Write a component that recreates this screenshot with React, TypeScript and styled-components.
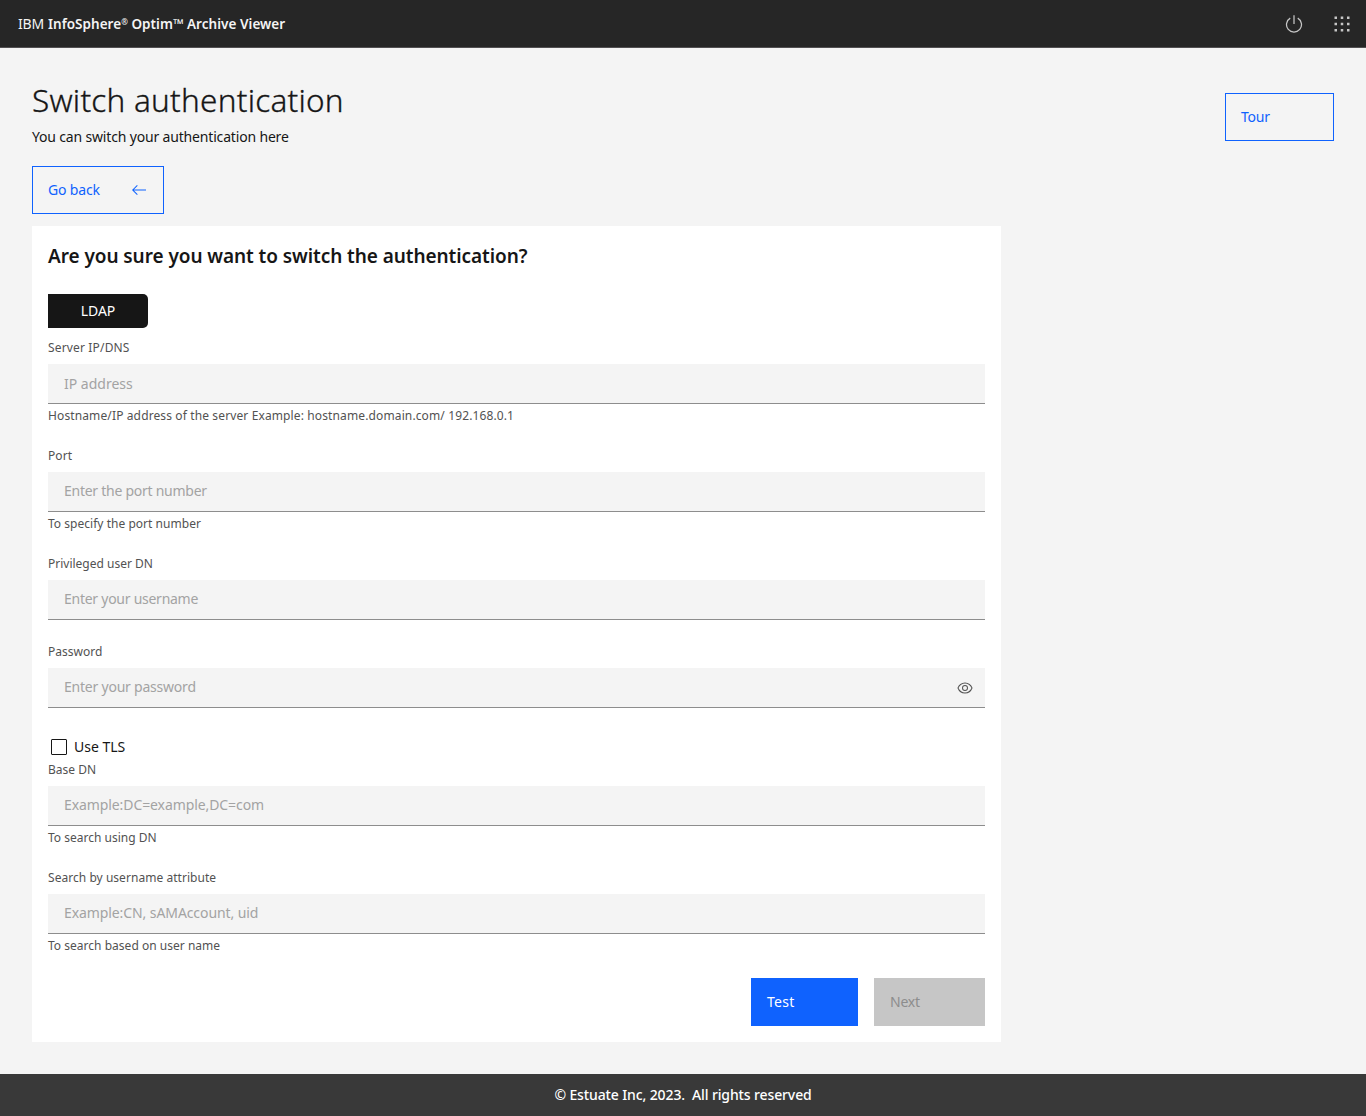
import React, { useState } from "react";
import styled, { createGlobalStyle } from "styled-components";

const GlobalStyle = createGlobalStyle`
  *, *::before, *::after { box-sizing: border-box; }
  body {
    margin: 0;
    background: #f4f4f4;
    color: #161616;
    font-family: "Noto Sans", "Open Sans", sans-serif;
    font-size: 14px;
    line-height: 18px;
  }
  button, input { font: inherit; border-radius: 0; }
`;

const Page = styled.div`
  display: flex;
  flex-direction: column;
  min-height: 1116px;
`;

const Header = styled.header`
  display: flex;
  align-items: center;
  justify-content: space-between;
  height: 48px;
  padding-left: 18px;
  background: #262626;
  border-bottom: 1px solid #525052;
  color: #f4f4f4;
`;

const Brand = styled.div`
  display: flex;
  gap: 4px;
  padding-top: 1px;
  letter-spacing: -0.2px;
`;

const Product = styled.strong`
  font-size: 13.5px;
  font-weight: 600;
  letter-spacing: 0.04px;
  white-space: nowrap;
`;

const Mark = styled.span`
  font-size: 8px;
  line-height: 1;
  vertical-align: 4px;
`;

const HeaderActions = styled.nav`
  display: flex;
`;

const HeaderButton = styled.button`
  display: grid;
  place-items: center;
  width: 48px;
  height: 48px;
  padding: 0;
  border: 0;
  background: transparent;
  color: #c6c6c6;
`;

const Main = styled.main`
  flex: 1;
  padding: 32px;
`;

const TitleBar = styled.div`
  display: flex;
  justify-content: space-between;
  align-items: flex-start;
`;

const Title = styled.h1`
  margin: 0;
  font-size: 31.5px;
  font-weight: 300;
  line-height: 40px;
  letter-spacing: 0.23px;
  -webkit-text-stroke: 0.3px #161616;
`;

const Subtitle = styled.p`
  margin: 8px 0 20px;
  letter-spacing: -0.17px;
`;

const ActionButton = styled.button<{ $kind: "outline" | "primary" | "disabled"; $width: number; $spacing?: number }>`
  display: flex;
  align-items: center;
  justify-content: space-between;
  width: ${(p) => p.$width}px;
  height: 48px;
  padding: 0 16px 0 15px;
  letter-spacing: ${(p) => p.$spacing ?? 0}px;
  border: 1px solid ${(p) => (p.$kind === "disabled" ? "#c6c6c6" : "#0f62fe")};
  background: ${(p) => ({ outline: "transparent", primary: "#0f62fe", disabled: "#c6c6c6" })[p.$kind]};
  color: ${(p) => ({ outline: "#0f62fe", primary: "#ffffff", disabled: "#8d8d8d" })[p.$kind]};
`;

const TourSlot = styled.div`
  padding-top: 13px;
`;

const Card = styled.section`
  width: 969px;
  margin-top: 12px;
  padding: 16px;
  background: #ffffff;
`;

const Question = styled.h2`
  margin: 0 0 24px;
  font-size: 19px;
  font-weight: 600;
  line-height: 28px;
  letter-spacing: -0.07px;
`;

const Segment = styled.button`
  display: block;
  width: 100px;
  height: 34px;
  margin-bottom: 12px;
  padding: 0;
  border: 0;
  && { border-radius: 0 5px 5px 0; }
  background: #161616;
  color: #ffffff;
  text-align: center;
`;

const FieldBlock = styled.div<{ $gap: number }>`
  display: flex;
  flex-direction: column;
  margin-bottom: ${(p) => p.$gap}px;
`;

const Label = styled.label<{ $spacing: number }>`
  margin-bottom: 8px;
  color: #525252;
  font-size: 12px;
  line-height: 16px;
  letter-spacing: ${(p) => p.$spacing}px;
`;

const InputRow = styled.div`
  display: flex;
  align-items: center;
  height: 40px;
  padding: 0 12px 0 16px;
  background: #f4f4f4;
  border-bottom: 1px solid #8d8d8d;
`;

const Input = styled.input<{ $spacing: number; $raised: boolean }>`
  flex: 1;
  min-width: 0;
  height: 39px;
  padding: 0 0 ${(p) => (p.$raised ? 2 : 0)}px;
  border: 0;
  outline: 0;
  background: transparent;
  color: #161616;
  letter-spacing: ${(p) => p.$spacing}px;
  &::placeholder { color: #a3a3a3; opacity: 1; }
`;

const RevealButton = styled.button`
  display: flex;
  padding: 0;
  border: 0;
  background: transparent;
  color: #525252;
`;

const Helper = styled.div<{ $spacing: number }>`
  margin-top: 4px;
  color: #525252;
  font-size: 12px;
  line-height: 16px;
  letter-spacing: ${(p) => p.$spacing}px;
`;

const CheckRow = styled.label`
  display: flex;
  align-items: center;
  gap: 7px;
  height: 24px;
  margin-bottom: 3px;
  padding-left: 3px;
`;

const CheckBox = styled.input`
  appearance: none;
  width: 16px;
  height: 16px;
  margin: 0;
  border: 1px solid #161616;
  && { border-radius: 1px; }
  &:checked { background: #161616; }
`;

const Actions = styled.div`
  display: flex;
  justify-content: flex-end;
  gap: 16px;
`;

const Footer = styled.footer`
  display: flex;
  align-items: center;
  justify-content: center;
  height: 42px;
  background: #393939;
  color: #ffffff;
  font-weight: 500;
  letter-spacing: -0.12px;
  white-space: pre;
`;

const PowerIcon = () => (
  <svg width="20" height="20" viewBox="0 0 32 32" fill="currentColor">
    <path d="M22.5 5.74l-1 1.73a11 11 0 1 1-11 0l-1-1.73a13 13 0 1 0 13 0z" />
    <path d="M15 2h2v14h-2z" />
  </svg>
);

const SwitcherIcon = () => (
  <svg width="20" height="20" viewBox="0 0 32 32" fill="currentColor">
    {[4, 14, 24].map((y) => [4, 14, 24].map((x) => <rect key={`${x}-${y}`} x={x} y={y} width="4" height="4" />))}
  </svg>
);

const ArrowLeftIcon = () => (
  <svg width="16" height="16" viewBox="0 0 16 16" fill="currentColor">
    <path d="M6 13l.7-.7-3.8-3.8H15v-1H2.9l3.8-3.8L6 3 1 8z" />
  </svg>
);

const ViewIcon = () => (
  <svg width="16" height="16" viewBox="0 0 32 32" fill="currentColor">
    <path d="M30.94 15.66A16.69 16.69 0 0 0 16 5 16.69 16.69 0 0 0 1.06 15.66a1 1 0 0 0 0 .68A16.69 16.69 0 0 0 16 27a16.69 16.69 0 0 0 14.94-10.66 1 1 0 0 0 0-.68zM16 25c-5.3 0-10.9-3.93-12.93-9C5.1 10.93 10.7 7 16 7s10.9 3.93 12.93 9C26.9 21.07 21.3 25 16 25z" />
    <path d="M16 10a6 6 0 1 0 6 6 6 6 0 0 0-6-6zm0 10a4 4 0 1 1 4-4 4 4 0 0 1-4 4z" />
  </svg>
);

type FieldProps = {
  id: string;
  label: string;
  labelSpacing?: number;
  placeholder: string;
  spacing?: number;
  raised?: boolean;
  helper?: string;
  helperSpacing?: number;
  gap?: number;
  secret?: boolean;
};

function Field({ id, label, labelSpacing = 0, placeholder, spacing = 0, raised = true, helper, helperSpacing = 0, gap = 24, secret }: FieldProps) {
  const [shown, setShown] = useState(false);
  return (
    <FieldBlock $gap={gap}>
      <Label htmlFor={id} $spacing={labelSpacing}>{label}</Label>
      <InputRow>
        <Input id={id} type={secret && !shown ? "password" : "text"} placeholder={placeholder} $spacing={spacing} $raised={raised} />
        {secret && (
          <RevealButton type="button" aria-label="Show password" onClick={() => setShown(!shown)}>
            <ViewIcon />
          </RevealButton>
        )}
      </InputRow>
      {helper && <Helper $spacing={helperSpacing}>{helper}</Helper>}
    </FieldBlock>
  );
}

export default function App() {
  return (
    <Page>
      <GlobalStyle />
      <Header>
        <Brand>
          <span>IBM</span>
          <Product>InfoSphere<Mark>®</Mark> Optim™ Archive Viewer</Product>
        </Brand>
        <HeaderActions>
          <HeaderButton aria-label="Log out"><PowerIcon /></HeaderButton>
          <HeaderButton aria-label="App switcher"><SwitcherIcon /></HeaderButton>
        </HeaderActions>
      </Header>
      <Main>
        <TitleBar>
          <div>
            <Title>Switch authentication</Title>
            <Subtitle>You can switch your authentication here</Subtitle>
            <ActionButton $kind="outline" $width={132} $spacing={-0.15}>Go back<ArrowLeftIcon /></ActionButton>
          </div>
          <TourSlot>
            <ActionButton $kind="outline" $width={109} $spacing={-0.2}>Tour</ActionButton>
          </TourSlot>
        </TitleBar>
        <Card>
          <Question>Are you sure you want to switch the authentication?</Question>
          <Segment>LDAP</Segment>
          <Field id="server" label="Server IP/DNS" labelSpacing={0.16} placeholder="IP address" raised={false}
            helper="Hostname/IP address of the server Example: hostname.domain.com/ 192.168.0.1" helperSpacing={0.124} />
          <Field id="port" label="Port" labelSpacing={0.06} placeholder="Enter the port number" spacing={-0.26}
            helper="To specify the port number" helperSpacing={0.03} />
          <Field id="user" label="Privileged user DN" placeholder="Enter your username" spacing={-0.26} />
          <Field id="password" label="Password" placeholder="Enter your password" spacing={-0.22} gap={27} secret />
          <CheckRow><CheckBox type="checkbox" />Use TLS</CheckRow>
          <Field id="base" label="Base DN" placeholder="Example:DC=example,DC=com" spacing={-0.09}
            helper="To search using DN" />
          <Field id="attribute" label="Search by username attribute" labelSpacing={0.04} placeholder="Example:CN, sAMAccount, uid" spacing={-0.09}
            helper="To search based on user name" helperSpacing={0.02} />
          <Actions>
            <ActionButton $kind="primary" $width={107} $spacing={0.3}>Test</ActionButton>
            <ActionButton $kind="disabled" $width={111} $spacing={-0.2}>Next</ActionButton>
          </Actions>
        </Card>
      </Main>
      <Footer>{"© Estuate Inc, 2023.  All rights reserved"}</Footer>
    </Page>
  );
}
